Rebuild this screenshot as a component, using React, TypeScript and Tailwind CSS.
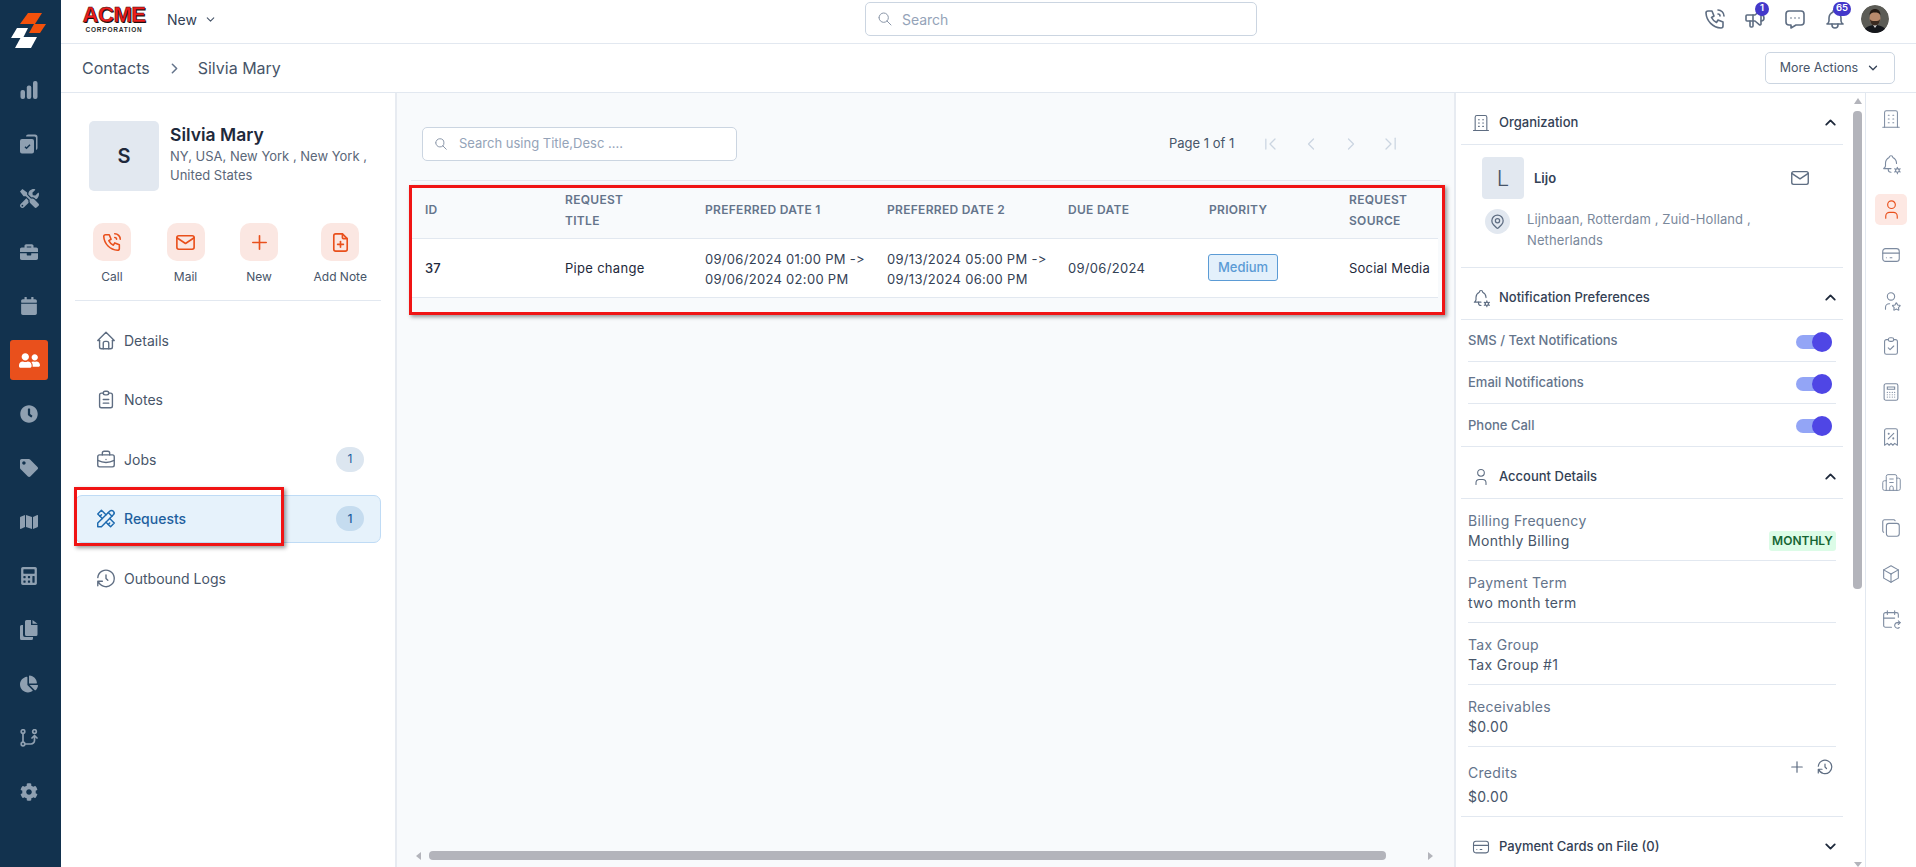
import type { ReactNode } from 'react';
import { Building2 } from 'lucide-react';
import {
  FaBriefcase,
  FaCalculator,
  FaCalendar,
  FaChartPie,
  FaClock,
  FaCog,
  FaMap,
  FaTag,
  FaTools,
  FaUserFriends,
} from 'react-icons/fa';
import {
  TbBellCog,
  TbBox,
  TbBriefcase,
  TbBuilding,
  TbCalendarRepeat,
  TbChevronDown,
  TbChevronLeft,
  TbChevronLeftPipe,
  TbChevronRight,
  TbChevronRightPipe,
  TbChevronUp,
  TbClipboardCheck,
  TbClipboardText,
  TbCopy,
  TbCreditCard,
  TbFilePlus,
  TbHistory,
  TbHome,
  TbMail,
  TbMapPin,
  TbBell,
  TbMessageDots,
  TbPhoneCall,
  TbPlus,
  TbReceiptTax,
  TbSearch,
  TbSpeakerphone,
  TbTools,
  TbUser,
  TbUserStar,
} from 'react-icons/tb';

function BarsIcon() {
  return (
    <svg width="18" height="18" viewBox="0 0 18 18" fill="currentColor">
      <rect x="0.5" y="9" width="4.5" height="9" rx="2" />
      <rect x="6.8" y="4.5" width="4.5" height="13.5" rx="2" />
      <rect x="13" y="0" width="4.5" height="18" rx="2" />
    </svg>
  );
}

function TasksIcon() {
  return (
    <svg width="18" height="20" viewBox="0 0 18 20" fill="currentColor">
      <path d="M6 2.5a2 2 0 0 1 2-2h7a2.5 2.5 0 0 1 2.5 2.5v11a2 2 0 0 1-1.5 2V4a1.5 1.5 0 0 0-1.5-1.5H6z" />
      <path fillRule="evenodd" d="M2 5h10a2 2 0 0 1 2 2v10.500a2 2 0 0 1-2 2H2a2 2 0 0 1-2-2V7a2 2 0 0 1 2-2zm2.500 8.200 2 2 4-4-1-1-3 3-1-1z" />
    </svg>
  );
}

function FilesIcon() {
  return (
    <svg width="18" height="20" viewBox="0 0 18 20" fill="currentColor">
      <path d="M0 6.500A1.500 1.500 0 0 1 1.500 5H3v10a2 2 0 0 0 2 2h8v1.500a1.500 1.500 0 0 1-1.500 1.500h-10A1.500 1.500 0 0 1 0 18.500z" />
      <path d="M5 1.500A1.500 1.500 0 0 1 6.500 0H11v5h6.500v9.500A1.500 1.500 0 0 1 16 16H6.500A1.500 1.500 0 0 1 5 14.500z" />
      <path d="M12.500 0 17.500 3.800h-5z" />
    </svg>
  );
}

function FlowIcon() {
  return (
    <svg width="18" height="18" viewBox="0 0 18 18" fill="none" stroke="currentColor" strokeWidth="1.700" strokeLinecap="round" strokeLinejoin="round">
      <circle cx="3" cy="2.500" r="1.800" />
      <circle cx="3" cy="15" r="1.800" />
      <circle cx="14.500" cy="2.500" r="1.800" />
      <path d="M3 4.500v8.500M5 15h6a3.500 3.500 0 0 0 3.500-3.500V6.500M12 9l2.500-2.500L17 9" />
    </svg>
  );
}

function CalcIcon() {
  return (
    <svg width="22" height="22" viewBox="0 0 24 24" fill="none" stroke="currentColor" strokeWidth="1.200" strokeLinecap="round">
      <rect x="4.500" y="3" width="15" height="18" rx="2" />
      <path d="M8 6.500h8v2.500H8z" />
      <path d="M8 12.500h.01M10.700 12.500h.01M13.400 12.500h.01M16 12.500h.01M8 15h.01M10.700 15h.01M13.400 15h.01M16 15h.01M8 17.500h.01M10.700 17.500h.01M13.400 17.500h.01M16 17.500h.01" strokeWidth="1.300" />
    </svg>
  );
}

const navItems: { icon: ReactNode; active?: boolean }[] = [
  { icon: <BarsIcon /> },
  { icon: <TasksIcon /> },
  { icon: <FaTools size={19} /> },
  { icon: <FaBriefcase size={18} /> },
  { icon: <FaCalendar size={18} /> },
  { icon: <FaUserFriends size={21} />, active: true },
  { icon: <FaClock size={18} /> },
  { icon: <FaTag size={18} /> },
  { icon: <FaMap size={18} /> },
  { icon: <FaCalculator size={18} /> },
  { icon: <FilesIcon /> },
  { icon: <FaChartPie size={18} /> },
  { icon: <FlowIcon /> },
  { icon: <FaCog size={18} /> },
];

function Sidebar() {
  return (
    <aside className="flex w-[61px] shrink-0 flex-col bg-[#12324e]">
      <div className="h-[63px] shrink-0">
        <svg width="61" height="63" viewBox="0 0 61 63">
          <polygon points="28,13 42,13 35,24 20,24" fill="#f4510b" />
          <polygon points="34,24 46,24 40,33 29,33" fill="#f4510b" />
          <polygon points="17,28 28,28 23,38 11,38" fill="#ffffff" />
          <polygon points="21,37 37,37 31,48 15,48" fill="#ffffff" />
        </svg>
      </div>
      {navItems.map((item, i) => (
        <div key={i} className="flex h-[54px] shrink-0 items-center justify-center pr-[3px] text-[#8fa0b1]">
          {item.active ? (
            <div className="flex h-[40px] w-[38px] items-center justify-center rounded-[3px] bg-[#e9501c] text-white">
              {item.icon}
            </div>
          ) : (
            item.icon
          )}
        </div>
      ))}
    </aside>
  );
}

function UserPhoto() {
  return (
    <svg width="28" height="28" viewBox="0 0 28 28" className="rounded-full">
      <circle cx="14" cy="14" r="14" fill="#5c5c56" />
      <path d="M2 28c1-6 7-8 12-8s11 2 12 8z" fill="#15171c" />
      <path d="M12 20l2 3 2-3z" fill="#d9d9d9" />
      <ellipse cx="14" cy="13" rx="5.500" ry="7" fill="#b98a6c" />
      <path d="M8.500 10c0-4 2.500-6 5.500-6s5.500 2 5.500 6c-1.500-2-3-2.500-5.500-2.500S10 8 8.500 10z" fill="#241a14" />
      <path d="M8.800 14c.7 3 1 6 5.200 6.500 4.200-.5 4.500-3.500 5.200-6.500-1 1.800-2.500 2-5.200 2s-4.200-.2-5.200-2z" fill="#3a2a20" />
    </svg>
  );
}

function TopBar() {
  return (
    <header className="flex h-[44px] shrink-0 items-center border-b border-[#e2e8f0] bg-white pb-[5px]">
      <div className="ml-[22px] flex w-[62px] flex-col items-center font-['Liberation_Sans',sans-serif] font-bold">
        <span className="text-[22px] leading-[20px] tracking-[-0.5px] text-[#ee1c1c] [-webkit-text-stroke:0.4px_#301010] [text-shadow:1px_1px_0_#111]">ACME</span>
        <span className="mt-[1px] text-[6.500px] leading-[7px] tracking-[0.8px] text-[#2b2b2b]">CORPORATION</span>
      </div>
      <span className="ml-[22px] text-[14px] text-[#334155]">New</span>
      <TbChevronDown size={13} className="ml-[7px] text-[#475569]" />
      <div className="ml-[648px] flex h-[34px] w-[392px] items-center rounded-[5px] border border-[#cbd5e1] bg-white pl-[11px]">
        <TbSearch size={16} strokeWidth={1.5} className="text-[#8a96a8]" />
        <span className="ml-[9px] text-[14px] text-[#94a3b8]">Search</span>
      </div>
      <div className="ml-auto mr-[27px] flex items-center text-[#5e6d82]">
        <TbPhoneCall size={24} strokeWidth={1.6} className="mr-[16px]" />
        <span className="relative mr-[16px] flex">
          <TbSpeakerphone size={24} strokeWidth={1.6} />
          <span className="absolute -right-[2px] -top-[5.500px] flex h-[14px] w-[14px] items-center justify-center rounded-full bg-[#4338ca] text-[9.500px] font-semibold text-white">1</span>
        </span>
        <TbMessageDots size={24} strokeWidth={1.6} className="mr-[16px]" />
        <span className="relative mr-[14px] flex">
          <TbBell size={24} strokeWidth={1.6} />
          <span className="absolute -right-[4px] -top-[5.500px] flex h-[14px] w-[18px] items-center justify-center rounded-full bg-[#4338ca] text-[9.500px] font-semibold text-white">65</span>
        </span>
        <UserPhoto />
      </div>
    </header>
  );
}

function BreadcrumbBar() {
  return (
    <div className="flex h-[49px] shrink-0 items-center border-b border-[#e2e8f0] bg-white pl-[21px] pr-[21px]">
      <span className="text-[16px] text-[#475569]">Contacts</span>
      <TbChevronRight size={17} strokeWidth={2.2} className="ml-[16px] text-[#64748b]" />
      <span className="ml-[15px] text-[16px] text-[#475569]">Silvia Mary</span>
      <button className="ml-auto flex h-[32px] w-[130px] items-center justify-center rounded-[5px] border border-[#cbd5e1] bg-white text-[12.500px] text-[#475569]">
        More Actions
        <TbChevronDown size={14} strokeWidth={2.2} className="ml-[8px] text-[#334155]" />
      </button>
    </div>
  );
}

function ActionButton({ icon, label }: { icon: ReactNode; label: string }) {
  return (
    <div className="flex flex-col items-center">
      <div className="flex h-[38px] w-[38px] items-center justify-center rounded-[10px] bg-[#fbe7e2] text-[#e9501c]">{icon}</div>
      <span className="mt-[8px] text-[12px] leading-[16px] text-[#475569]">{label}</span>
    </div>
  );
}

function NavRow({ icon, label, count, active }: { icon: ReactNode; label: string; count?: number; active?: boolean }) {
  return (
    <div className={`flex h-[48px] items-center rounded-[7px] border pl-[19px] pr-[16px] text-[14px] ${active ? 'border-[#bfdbf5] bg-[#e6f2fb] font-medium text-[#1e5f9e]' : 'border-transparent text-[#475569]'}`}>
      <span className={`flex w-[22px] justify-center ${active ? 'text-[#1e6bb0]' : 'text-[#5e6d82]'}`}>{icon}</span>
      <span className="ml-[7px]">{label}</span>
      {count !== undefined && (
        <span className={`ml-auto flex h-[25px] w-[28px] items-center justify-center rounded-full text-[12px] text-[#1e5f9e] ${active ? 'bg-[#c5dcef]' : 'bg-[#dce6f0]'}`}>{count}</span>
      )}
    </div>
  );
}

function LeftPanel() {
  return (
    <section className="w-[336px] shrink-0 border-r-2 border-[#e7ebf1] bg-white">
      <div className="ml-[28px] mt-[28px] flex">
        <div className="flex h-[70px] w-[70px] items-center justify-center rounded-[5px] bg-[#e2e8f0] text-[20px] font-semibold text-[#1e293b]">S</div>
        <div className="ml-[11px] w-[210px] pt-[2px]">
          <div className="text-[17.500px] font-semibold leading-[24px] text-[#1e293b]">Silvia Mary</div>
          <div className="text-[13px] leading-[19px] text-[#5b6779]">NY, USA, New York , New York , United States</div>
        </div>
      </div>
      <div className="ml-[32px] mt-[32px] flex gap-[35.500px]">
        <ActionButton icon={<TbPhoneCall size={22} strokeWidth={1.7} />} label="Call" />
        <ActionButton icon={<TbMail size={23} strokeWidth={1.7} />} label="Mail" />
        <ActionButton icon={<TbPlus size={23} strokeWidth={1.7} />} label="New" />
        <ActionButton icon={<TbFilePlus size={23} strokeWidth={1.7} />} label="Add Note" />
      </div>
      <div className="mx-[14px] mt-[15px] border-t border-[#e2e8f0]" />
      <div className="relative mx-[14px] mt-[15px] flex flex-col gap-[11.500px]">
        <NavRow icon={<TbHome size={25} strokeWidth={1.5} />} label="Details" />
        <NavRow icon={<TbClipboardText size={25} strokeWidth={1.5} />} label="Notes" />
        <NavRow icon={<TbBriefcase size={25} strokeWidth={1.5} />} label="Jobs" count={1} />
        <NavRow icon={<TbTools size={25} strokeWidth={1.6} />} label="Requests" count={1} active />
        <NavRow icon={<TbHistory size={25} strokeWidth={1.5} />} label="Outbound Logs" />
        {/* annotation box from the screenshot */}
        <div className="absolute left-[-1px] top-[171px] h-[59px] w-[210px] border-[3px] border-[#f01414] shadow-[2px_2px_4px_rgba(0,0,0,0.4)]" />
      </div>
    </section>
  );
}

const columns = [
  { w: 'w-[140px]', label: 'ID' },
  { w: 'w-[140px]', label: 'REQUEST TITLE' },
  { w: 'w-[182px]', label: 'PREFERRED DATE 1' },
  { w: 'w-[181px]', label: 'PREFERRED DATE 2' },
  { w: 'w-[141px]', label: 'DUE DATE' },
  { w: 'w-[140px]', label: 'PRIORITY' },
  { w: 'w-[103px]', label: 'REQUEST SOURCE' },
];

function CenterPanel() {
  return (
    <section className="flex min-w-0 flex-1 flex-col bg-[#f8fafc]">
      <div className="mx-[14px] flex h-[88px] shrink-0 items-start border-b border-[#e5e9ef] pt-[34px]">
        <div className="ml-[11px] flex h-[34px] w-[315px] shrink-0 items-center rounded-[5px] border border-[#cbd5e1] bg-white pl-[11px]">
          <TbSearch size={14} strokeWidth={1.7} className="text-[#8a96a8]" />
          <span className="ml-[11px] text-[13px] text-[#94a3b8]">Search using Title,Desc ....</span>
        </div>
        <div className="ml-[432px] flex h-[34px] items-center text-[#cbd5e1]">
          <span className="mr-[26px] text-[13px] text-[#475569]">Page 1 of 1</span>
          <TbChevronLeftPipe size={20} strokeWidth={1.5} className="mr-[21px]" />
          <TbChevronLeft size={20} strokeWidth={1.5} className="mr-[20px]" />
          <TbChevronRight size={20} strokeWidth={1.5} className="mr-[20px]" />
          <TbChevronRightPipe size={20} strokeWidth={1.5} />
        </div>
      </div>
      <div className="relative mx-[14px]">
        <table className="w-[1027px] table-fixed border-collapse">
          <thead>
            <tr className="h-[57px] border-b border-[#e2e8f0]">
              {columns.map((c) => (
                <th key={c.label} className={`${c.w} pl-[14px] pr-[40px] pt-[1px] text-left text-[12px] font-semibold leading-[21px] tracking-[0.3px] text-[#64748b]`}>{c.label}</th>
              ))}
            </tr>
          </thead>
          <tbody>
            <tr className="h-[59px] border-b border-[#e2e8f0] bg-white text-[13px] text-[#334155]">
              <td className="pl-[14px] pt-[2px] font-medium text-[#1e293b]">37</td>
              <td className="pl-[14px] pt-[2px] tracking-[0.3px] text-[#1e293b]">Pipe change</td>
              <td className="whitespace-nowrap pl-[14px] pt-[2px] leading-[20px] tracking-[0.3px]">
                09/06/2024 01:00 PM -&gt;
                <br />
                09/06/2024 02:00 PM
              </td>
              <td className="whitespace-nowrap pl-[14px] pt-[2px] leading-[20px] tracking-[0.3px]">
                09/13/2024 05:00 PM -&gt;
                <br />
                09/13/2024 06:00 PM
              </td>
              <td className="pl-[14px] pt-[2px] tracking-[0.3px]">09/06/2024</td>
              <td className="pl-[13px]">
                <span className="flex h-[27px] w-[70px] items-center justify-center rounded-[3px] border border-[#5b9bd5] bg-[#e3f0fb] text-[13px] font-medium text-[#5b9bd5]">Medium</span>
              </td>
              <td className="whitespace-nowrap pl-[14px] pt-[2px] tracking-[0.2px] text-[#1e293b]">Social Media</td>
            </tr>
          </tbody>
        </table>
        {/* annotation box from the screenshot */}
        <div className="absolute left-[-2px] top-[4px] h-[130px] w-[1036px] border-[3px] border-[#f01414] shadow-[2px_2px_4px_rgba(0,0,0,0.4)]" />
      </div>
      <div className="mb-[7px] mt-auto flex h-[9px] items-center pl-[19px]">
        <span className="h-0 w-0 border-y-[4px] border-r-[5px] border-y-transparent border-r-[#b3b4bb]" />
        <span className="ml-[8px] h-[9px] w-[957px] rounded-[4px] bg-[#b3b4bb]" />
        <span className="ml-[42px] h-0 w-0 border-y-[4px] border-l-[5px] border-y-transparent border-l-[#b3b4bb]" />
      </div>
    </section>
  );
}

function SectionHeader({ icon, title, open }: { icon: ReactNode; title: string; open?: boolean }) {
  return (
    <div className="flex h-[52px] shrink-0 items-center border-b border-[#e2e8f0] pl-[9px] pr-[4px] pt-[8px]">
      <span className="flex w-[22px] justify-center text-[#5e6d82]">{icon}</span>
      <span className="ml-[7px] text-[13px] font-medium text-[#334155]">{title}</span>
      {open ? (
        <TbChevronUp size={17} strokeWidth={2.6} className="ml-auto text-[#1e293b]" />
      ) : (
        <TbChevronDown size={17} strokeWidth={2.6} className="ml-auto text-[#1e293b]" />
      )}
    </div>
  );
}

function ToggleRow({ label, last }: { label: string; last?: boolean }) {
  return (
    <div className={`mx-[7px] flex h-[42px] items-center justify-between ${last ? '' : 'border-b border-[#e2e8f0]'}`}>
      <span className="pt-[1px] text-[13px] font-medium text-[#64748b]">{label}</span>
      <span className="relative mr-[4px] mt-[2px] h-[14px] w-[36px] rounded-full bg-[#93a5f6]">
        <span className="absolute -top-[3px] right-0 h-[20px] w-[20px] rounded-full bg-[#4f46e5]" />
      </span>
    </div>
  );
}

function DetailRow({ label, value, badge }: { label: string; value: string; badge?: string }) {
  return (
    <div className="mx-[7px] flex h-[62px] shrink-0 items-end justify-between border-b border-[#e2e8f0] pb-[9px] text-[14px] leading-[20px] tracking-[0.3px]">
      <div>
        <div className="text-[#64748b]">{label}</div>
        <div className="text-[#475569]">{value}</div>
      </div>
      {badge && <span className="flex h-[20px] w-[67px] items-center justify-center rounded-[3px] bg-[#dcfce7] text-[12px] font-semibold tracking-normal text-[#166534]">{badge}</span>}
    </div>
  );
}

function RightPanel() {
  return (
    <section className="flex w-[411px] shrink-0 overflow-hidden border-l-2 border-[#e7ebf1] bg-white">
      <div className="ml-[5px] w-[382px] shrink-0">
        <SectionHeader icon={<TbBuilding size={20} strokeWidth={1.3} />} title="Organization" open />
        <div className="h-[123px] border-b border-[#e2e8f0] pl-[21px] pr-[32px] pt-[12px]">
          <div className="flex items-center">
            <div className="flex h-[42px] w-[42px] items-center justify-center rounded-[4px] bg-[#e2e8f0] text-[22px] font-light text-[#475569]">L</div>
            <span className="ml-[10px] pt-[2px] text-[13px] font-semibold text-[#334155]">Lijo</span>
            <TbMail size={22} strokeWidth={1.5} className="ml-auto text-[#5e6d82]" />
          </div>
          <div className="mt-[10px] flex">
            <span className="ml-[3px] flex h-[25px] w-[25px] shrink-0 items-center justify-center rounded-full bg-[#e2e8f0] text-[#5e6d82]">
              <TbMapPin size={17} strokeWidth={1.8} />
            </span>
            <span className="ml-[17px] text-[13px] leading-[21px] tracking-[0.1px] text-[#7a889b]">Lijnbaan, Rotterdam , Zuid-Holland ,<br />Netherlands</span>
          </div>
        </div>
        <SectionHeader icon={<TbBellCog size={20} strokeWidth={1.4} />} title="Notification Preferences" open />
        <div className="border-b border-[#e2e8f0]">
          <ToggleRow label="SMS / Text Notifications" />
          <ToggleRow label="Email Notifications" />
          <ToggleRow label="Phone Call" last />
        </div>
        <SectionHeader icon={<TbUser size={20} strokeWidth={1.3} />} title="Account Details" open />
        <DetailRow label="Billing Frequency" value="Monthly Billing" badge="MONTHLY" />
        <DetailRow label="Payment Term" value="two month term" />
        <DetailRow label="Tax Group" value="Tax Group #1" />
        <DetailRow label="Receivables" value="$0.00" />
        <div className="flex h-[70px] justify-between border-b border-[#e2e8f0] pl-[7px] pr-[9px] pt-[16px] text-[14px] tracking-[0.3px]">
          <div>
            <div className="leading-[20px] text-[#64748b]">Credits</div>
            <div className="mt-[4px] leading-[20px] text-[#475569]">$0.00</div>
          </div>
          <div className="-mt-[6px] flex h-[20px] items-center gap-[10px] text-[#5e6d82]">
            <TbPlus size={18} strokeWidth={1.6} />
            <TbHistory size={18} strokeWidth={1.6} />
          </div>
        </div>
        <SectionHeader icon={<TbCreditCard size={20} strokeWidth={1.3} />} title="Payment Cards on File (0)" />
      </div>
      <div className="ml-[10px] flex w-[9px] shrink-0 flex-col items-center pt-[5px]">
        <span className="h-0 w-0 border-x-[4.500px] border-b-[6px] border-x-transparent border-b-[#b3b4bb]" />
        <span className="mt-[7px] h-[478px] w-[9px] rounded-[4px] bg-[#b3b4bb]" />
        <span className="mt-auto h-0 w-0 border-x-[4.500px] border-t-[5px] border-x-transparent border-t-[#b3b4bb]" />
      </div>
    </section>
  );
}

const stripIcons: { icon: ReactNode; active?: boolean }[] = [
  { icon: <TbBuilding size={22} strokeWidth={1.1} /> },
  { icon: <TbBellCog size={22} strokeWidth={1.2} /> },
  { icon: <TbUser size={23} strokeWidth={1.2} />, active: true },
  { icon: <TbCreditCard size={22} strokeWidth={1.2} /> },
  { icon: <TbUserStar size={22} strokeWidth={1.2} /> },
  { icon: <TbClipboardCheck size={22} strokeWidth={1.2} /> },
  { icon: <CalcIcon /> },
  { icon: <TbReceiptTax size={22} strokeWidth={1.2} /> },
  { icon: <Building2 size={21} strokeWidth={1.1} /> },
  { icon: <TbCopy size={22} strokeWidth={1.2} /> },
  { icon: <TbBox size={22} strokeWidth={1.2} /> },
  { icon: <TbCalendarRepeat size={22} strokeWidth={1.2} /> },
];

function IconStrip() {
  return (
    <aside className="flex w-[51px] shrink-0 flex-col border-l border-[#e2e8f0] bg-white pt-[3px]">
      {stripIcons.map((item, i) => (
        <div key={i} className="flex h-[45.500px] shrink-0 items-center justify-center text-[#7d8ba0]">
          {item.active ? (
            <div className="flex h-[31px] w-[32px] items-center justify-center rounded-[5px] bg-[#fde8e3] text-[#e9501c]">{item.icon}</div>
          ) : (
            item.icon
          )}
        </div>
      ))}
    </aside>
  );
}

export default function App() {
  return (
    <div className="flex h-screen w-screen overflow-hidden bg-white font-['Inter',sans-serif]">
      <Sidebar />
      <div className="flex min-w-0 flex-1 flex-col">
        <TopBar />
        <BreadcrumbBar />
        <main className="flex min-h-0 flex-1">
          <LeftPanel />
          <CenterPanel />
          <RightPanel />
          <IconStrip />
        </main>
      </div>
    </div>
  );
}
